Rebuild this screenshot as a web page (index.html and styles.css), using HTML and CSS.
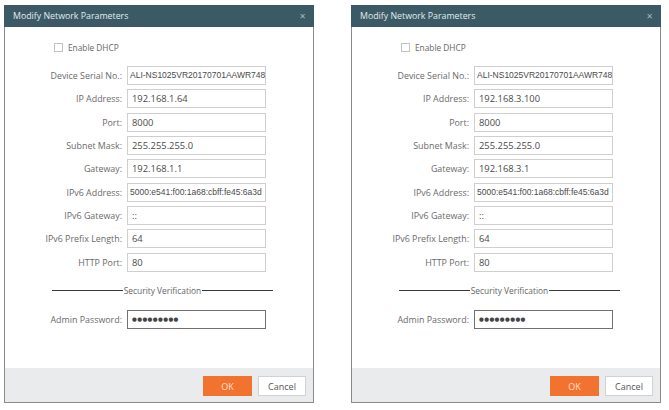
FILE: index.html
```html
<!DOCTYPE html>
<html>
<head>
<meta charset="utf-8">
<link rel="stylesheet" href="styles.css">
</head>
<body>
<div class="page">
  <div class="dialog">
    <div class="header"><span class="title">Modify Network Parameters</span><span class="close">&#x2715;</span></div>
    <div class="body">
      <label class="dhcp"><span class="box"></span><span>Enable DHCP</span></label>
      <div class="form">
        <span class="lbl">Device Serial No.:</span><div class="inp serial">ALI-NS1025VR20170701AAWR748</div>
        <span class="lbl">IP Address:</span><div class="inp">192.168.1.64</div>
        <span class="lbl">Port:</span><div class="inp">8000</div>
        <span class="lbl">Subnet Mask:</span><div class="inp">255.255.255.0</div>
        <span class="lbl">Gateway:</span><div class="inp">192.168.1.1</div>
        <span class="lbl">IPv6 Address:</span><div class="inp v6">5000:e541:f00:1a68:cbff:fe45:6a3d</div>
        <span class="lbl">IPv6 Gateway:</span><div class="inp">::</div>
        <span class="lbl">IPv6 Prefix Length:</span><div class="inp">64</div>
        <span class="lbl">HTTP Port:</span><div class="inp">80</div>
      </div>
      <div class="sec"><span class="line"></span><span class="sectext">Security Verification</span><span class="line"></span></div>
      <div class="form admin">
        <span class="lbl">Admin Password:</span><div class="inp pwd">●●●●●●●●●</div>
      </div>
    </div>
    <div class="footer"><button class="btn ok">OK</button><button class="btn cancel">Cancel</button></div>
  </div>
  <div class="dialog">
    <div class="header"><span class="title">Modify Network Parameters</span><span class="close">&#x2715;</span></div>
    <div class="body">
      <label class="dhcp"><span class="box"></span><span>Enable DHCP</span></label>
      <div class="form">
        <span class="lbl">Device Serial No.:</span><div class="inp serial">ALI-NS1025VR20170701AAWR748</div>
        <span class="lbl">IP Address:</span><div class="inp">192.168.3.100</div>
        <span class="lbl">Port:</span><div class="inp">8000</div>
        <span class="lbl">Subnet Mask:</span><div class="inp">255.255.255.0</div>
        <span class="lbl">Gateway:</span><div class="inp">192.168.3.1</div>
        <span class="lbl">IPv6 Address:</span><div class="inp v6">5000:e541:f00:1a68:cbff:fe45:6a3d</div>
        <span class="lbl">IPv6 Gateway:</span><div class="inp">::</div>
        <span class="lbl">IPv6 Prefix Length:</span><div class="inp">64</div>
        <span class="lbl">HTTP Port:</span><div class="inp">80</div>
      </div>
      <div class="sec"><span class="line"></span><span class="sectext">Security Verification</span><span class="line"></span></div>
      <div class="form admin">
        <span class="lbl">Admin Password:</span><div class="inp pwd">●●●●●●●●●</div>
      </div>
    </div>
    <div class="footer"><button class="btn ok">OK</button><button class="btn cancel">Cancel</button></div>
  </div>
</div>
</body>
</html>
```
FILE: styles.css
```css
* { box-sizing: border-box; }
body {
  margin: 0;
  background: #fff;
  font-family: "Open Sans", "Noto Sans", sans-serif;
  color: #555;
}
.page {
  display: flex;
  gap: 37px;
  padding: 5px 0 0 4px;
}
.dialog {
  width: 310px;
  height: 398px;
  border: 1px solid #8a8a8a;
  border-top: none;
  display: flex;
  flex-direction: column;
  background: #fff;
}
.header {
  height: 22px;
  margin: 0 -1px;
  background: #3c5a65;
  display: flex;
  align-items: center;
  justify-content: space-between;
  padding: 0 8px 0 9px;
  color: #e3eaed;
  font-size: 8.8px;
}
.close {
  color: #a7b6bb;
  font-size: 8px;
  font-family: "DejaVu Sans", sans-serif;
}
.body {
  padding-top: 15px;
}
.dhcp {
  display: flex;
  align-items: center;
  gap: 5px;
  margin-left: 49px;
  height: 10px;
  font-size: 8.3px;
  color: #666;
}
.box {
  width: 9px;
  height: 9px;
  border: 1px solid #c4c4c4;
  background: #fff;
}
.form {
  display: grid;
  grid-template-columns: 117px 139px;
  column-gap: 5px;
  row-gap: 4.33px;
  margin-top: 14px;
}
.lbl {
  text-align: right;
  font-size: 8.9px;
  color: #6a6a6a;
  line-height: 19px;
  white-space: nowrap;
}
.inp {
  height: 19px;
  border: 1px solid #cfcfcf;
  font-size: 9.4px;
  color: #4a4a4a;
  line-height: 17px;
  padding-left: 4px;
  white-space: nowrap;
  overflow: hidden;
}
.inp.serial, .inp.v6 {
  padding-left: 2px;
  font-family: "Liberation Sans", sans-serif;
  font-size: 8.5px;
}
.sec {
  display: flex;
  align-items: center;
  margin: 13px 0 0 47px;
  width: 221px;
  height: 12px;
}
.line {
  flex: 1;
  height: 1px;
  background: #3a3a3a;
}
.sectext {
  font-size: 8.4px;
  color: #666;
  padding: 0 1px;
}
.form.admin {
  margin-top: 13px;
}
.inp.pwd {
  border-color: #707070;
  font-family: "DejaVu Sans", sans-serif;
  font-size: 5.5px;
  color: #444;
  letter-spacing: 0.4px;
}
.footer {
  margin-top: auto;
  height: 34px;
  background: #e9ebec;
  display: flex;
  justify-content: flex-end;
  align-items: flex-start;
  gap: 6px;
  padding: 8px 7px 0 0;
}
.btn {
  height: 20px;
  width: 49px;
  font-family: "Open Sans", "Noto Sans", sans-serif;
  font-size: 9px;
  border: none;
  padding: 0;
}
.ok {
  background: #f27330;
  color: #fde0cc;
}
.cancel {
  background: #fff;
  border: 1px solid #d2d2d2;
  color: #555;
  width: 48px;
}
```
